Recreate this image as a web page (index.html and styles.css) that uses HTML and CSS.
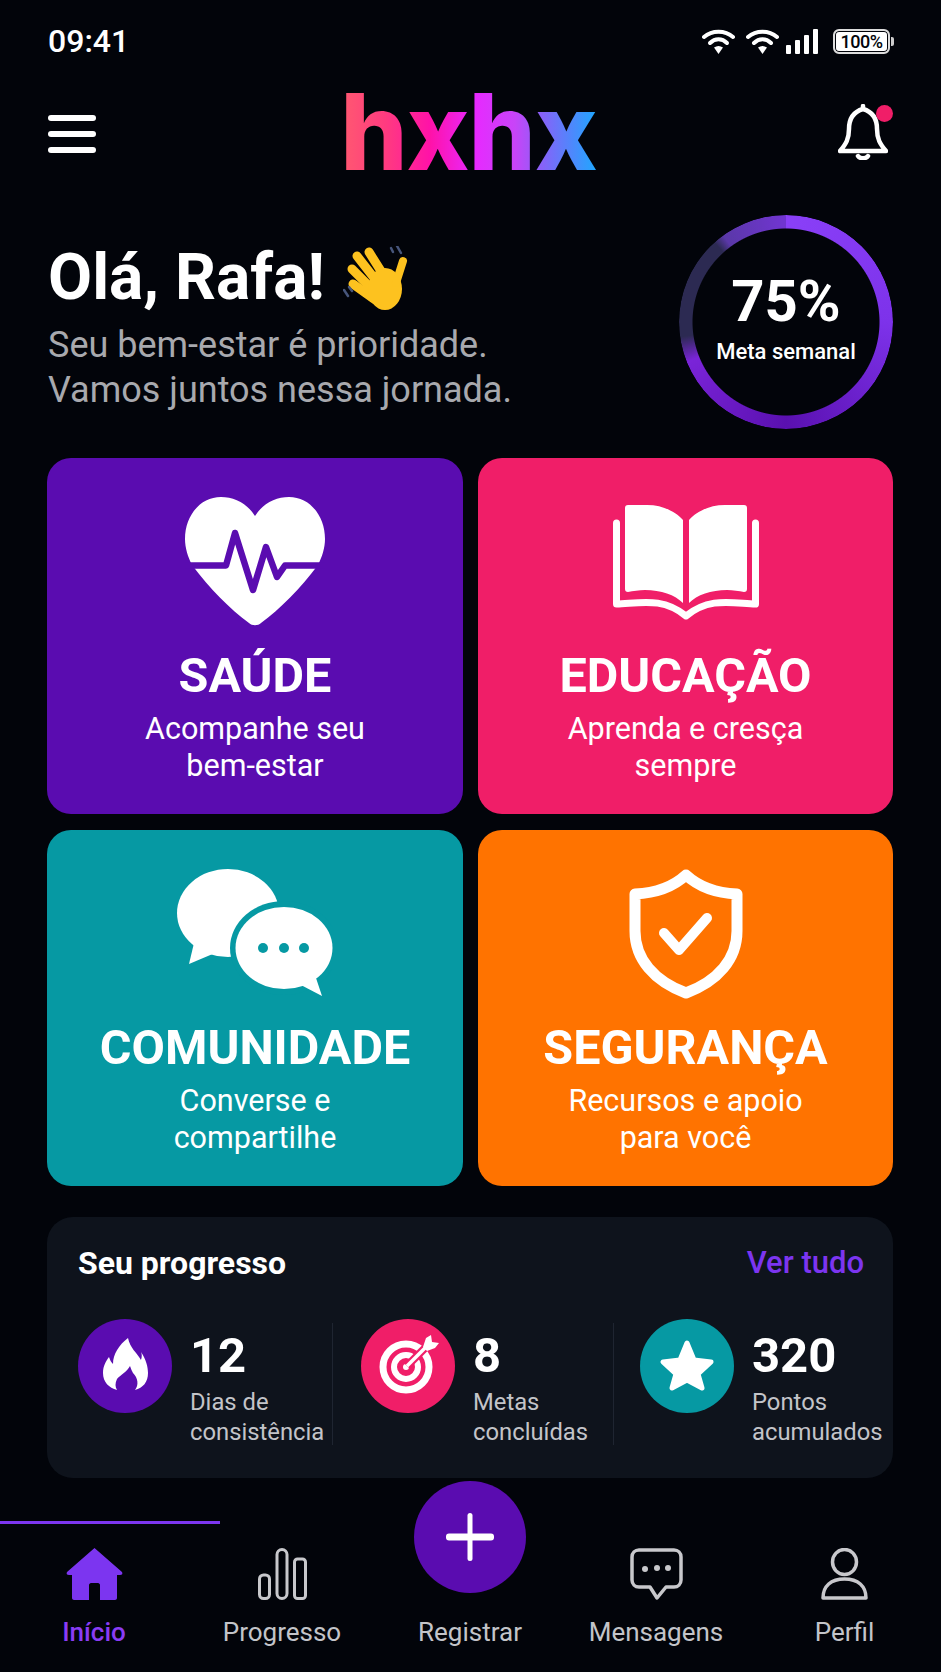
FILE: index.html
```html
<!DOCTYPE html>
<html lang="pt-BR">
<head>
  <meta charset="UTF-8" />
  <meta name="viewport" content="width=device-width, initial-scale=1.0" />
  <title>hxhx</title>
  <link rel="stylesheet" href="styles.css">
</head>
<body>
  <div class="screen">
    <div class="status-bar">
      <span class="time">09:41</span>
      <div class="status-icons">
        <svg class="wifi" viewBox="0 0 33 25" fill="none" stroke="#fff" stroke-width="4" stroke-linecap="round"><path d="M2 8C10 1 23 1 31 8"/><path d="M8 14C13 9 20 9 25 14"/><path d="M16.500 25L12 18.500C15 16.500 18 16.500 21 18.500Z" fill="#fff" stroke="none"/></svg>
        <svg class="wifi" viewBox="0 0 33 25" fill="none" stroke="#fff" stroke-width="4" stroke-linecap="round"><path d="M2 8C10 1 23 1 31 8"/><path d="M8 14C13 9 20 9 25 14"/><path d="M16.500 25L12 18.500C15 16.500 18 16.500 21 18.500Z" fill="#fff" stroke="none"/></svg>
        <svg class="signal" viewBox="0 0 32 25" fill="#fff"><rect x="0" y="16" width="5" height="9" rx="1"/><rect x="9" y="11" width="5" height="14" rx="1"/><rect x="18" y="6" width="5" height="19" rx="1"/><rect x="27" y="0" width="5" height="25" rx="1"/></svg>
        <div class="battery"><span class="battery-level">100%</span></div>
      </div>
    </div>

    <header class="top-bar">
      <div class="menu-btn"><span></span><span></span><span></span></div>
      <div class="logo">hxhx</div>
      <div class="bell">
        <svg viewBox="0 0 50 56" fill="none" stroke="#fff" stroke-width="4.500" stroke-linejoin="round" stroke-linecap="round"><path d="M25 5C15 8 11 16 11 25C11 35 8 40 2 47H48C42 40 39 35 39 25C39 16 35 8 25 5Z"/><path d="M25 2V5"/><path d="M20 52C22 55 28 55 30 52"/></svg>
        <span class="bell-dot"></span>
      </div>
    </header>

    <section class="greeting">
      <div class="greeting-text">
        <h1>Olá, Rafa! <svg class="wave" viewBox="0 0 65 65" fill="none" stroke-linecap="round"><g stroke="#fdc21f" stroke-width="9"><path d="M26 6L43 33"/><path d="M14 10L35 37"/><path d="M9 23L31 45"/><path d="M10 38L31 53"/></g><ellipse cx="42" cy="43" rx="17" ry="21" fill="#fdc21f"/><path d="M60 15L53 37" stroke="#fdc21f" stroke-width="8"/><g stroke="#47567c" stroke-width="2.500"><path d="M48 2L50 6"/><path d="M54 0L58 7"/><path d="M1 44L5 50"/><path d="M6 41L9 45"/></g></svg></h1>
        <p>Seu bem-estar é prioridade.<br>Vamos juntos nessa jornada.</p>
      </div>
      <div class="goal-ring">
        <strong>75%</strong>
        <span>Meta semanal</span>
      </div>
    </section>

    <section class="cards">
      <div class="card card-purple">
        <svg class="card-icon" viewBox="0 0 140 130"><path d="M70 19C62 6 49 0 36 0C15 0 0 19 0 42C0 51 3 60 7 68C25 92 45 112 64 126C67 129 73 129 76 126C95 112 115 92 133 68C137 60 140 51 140 42C140 19 125 0 104 0C91 0 78 6 70 19Z" fill="#fff"/><path d="M0 68.500H41L50 36L68 93L81 50L92 80L100 68.500H140" fill="none" stroke="#5a0cb0" stroke-width="6.500" stroke-linejoin="round"/></svg>
        <h2>SAÚDE</h2>
        <p>Acompanhe seu<br>bem-estar</p>
      </div>
      <div class="card card-pink">
        <svg class="card-icon" viewBox="0 0 146 130"><g fill="#fff"><path d="M15 8H34C50 8 63 15 70 23V106C62 98 48 93 32 93C26 93 20 94 15 95C13 95 12 94 12 92V11C12 9 13 8 15 8Z"/><path d="M131 8H112C96 8 83 15 76 23V106C84 98 98 93 114 93C120 93 126 94 131 95C133 95 134 94 134 92V11C134 9 133 8 131 8Z"/></g><path d="M3.500 26V107C28 106 50 100 73 119C96 100 118 106 142.500 107V26" fill="none" stroke="#fff" stroke-width="7" stroke-linejoin="round" stroke-linecap="round"/></svg>
        <h2>EDUCAÇÃO</h2>
        <p>Aprenda e cresça<br>sempre</p>
      </div>
      <div class="card card-teal">
        <svg class="card-icon" viewBox="0 0 156 130"><g fill="#fff"><ellipse cx="51" cy="44" rx="51" ry="44"/><path d="M17 74L12 95L38 84Z"/></g><ellipse cx="107" cy="79" rx="54" ry="47" fill="#0699a3"/><g fill="#fff"><ellipse cx="107" cy="79" rx="48.500" ry="41"/><path d="M138 106L145 127L122 115Z"/></g><g fill="#0699a3"><circle cx="86" cy="79" r="5"/><circle cx="107" cy="79" r="5"/><circle cx="127" cy="79" r="5"/></g></svg>
        <h2>COMUNIDADE</h2>
        <p>Converse e<br>compartilhe</p>
      </div>
      <div class="card card-orange">
        <svg class="card-icon" viewBox="0 0 114 130" fill="none" stroke="#fff" stroke-linejoin="round" stroke-linecap="round"><path d="M57 6C44 18 28 24 6 25V62C6 90 25 112 57 124C89 112 108 90 108 62V25C86 24 70 18 57 6Z" stroke-width="11"/><path d="M35 64L50 81L78 49" stroke-width="10"/></svg>
        <h2>SEGURANÇA</h2>
        <p>Recursos e apoio<br>para você</p>
      </div>
    </section>

    <section class="progress">
      <div class="progress-head">
        <h3>Seu progresso</h3>
        <a class="see-all">Ver tudo</a>
      </div>
      <div class="stats">
        <div class="stat">
          <div class="stat-icon bg-purple">
            <svg viewBox="0 0 94 94" fill="#fff"><path d="M50 19C52 29 59 34 63 41C64 38 64 35 63 33C68 40 70 48 70 54C70 63 65 69 57 71C61 66 60 59 55 54C54 52 53 50 52 47C49 53 42 56 39 60C37 64 37 68 39 71C31 69 25 63 25 54C25 47 28 42 31 38C32 41 33 43 35 45C35 35 41 26 50 19Z"/></svg>
          </div>
          <div class="stat-text">
            <strong>12</strong>
            <span>Dias de<br>consistência</span>
          </div>
        </div>
        <div class="stat">
          <div class="stat-icon bg-pink">
            <svg viewBox="0 0 94 94" fill="none" stroke="#fff"><circle cx="45" cy="48" r="23" stroke-width="7"/><circle cx="45" cy="48" r="12" stroke-width="6"/><circle cx="45" cy="48" r="3" fill="#fff" stroke="none"/><path d="M46 47L66 27" stroke="#f01e68" stroke-width="8"/><path d="M46 47L66 27" stroke-width="3.500"/><path d="M62 28L65 19L70 16L71 23L78 24L74 29L66 32Z" fill="#fff" stroke="none"/></svg>
          </div>
          <div class="stat-text">
            <strong>8</strong>
            <span>Metas<br>concluídas</span>
          </div>
        </div>
        <div class="stat">
          <div class="stat-icon bg-teal">
            <svg viewBox="0 0 94 94"><path d="M47 24L54 41L71 43L58 55L62 69L47 61L32 69L36 55L23 43L40 41Z" fill="#fff" stroke="#fff" stroke-width="5" stroke-linejoin="round"/></svg>
          </div>
          <div class="stat-text">
            <strong>320</strong>
            <span>Pontos<br>acumulados</span>
          </div>
        </div>
      </div>
    </section>

    <nav class="tabbar">
      <div class="tab active">
        <svg class="tab-icon" viewBox="0 0 57 52" fill="#7c35f0"><path d="M28.500 0L56 24C57 26 56 27 54 27H51V50C51 51 50 52 49 52H34V37C34 36 33 35 32 35H25C24 35 23 36 23 37V52H8C7 52 6 51 6 50V27H3C1 27 0 26 1 24Z"/></svg>
        <span>Início</span>
      </div>
      <div class="tab">
        <svg class="tab-icon" viewBox="0 0 49 52" fill="none" stroke="#c8c8cc" stroke-width="3"><rect x="1.500" y="27" width="10" height="23.500" rx="4"/><rect x="19" y="1.500" width="10" height="49" rx="5"/><rect x="36.500" y="11" width="11" height="39.500" rx="3"/></svg>
        <span>Progresso</span>
      </div>
      <div class="tab">
        <button class="fab"></button>
        <span>Registrar</span>
      </div>
      <div class="tab">
        <svg class="tab-icon" viewBox="0 0 53 52" fill="none" stroke="#c8c8cc" stroke-width="3.500" stroke-linejoin="round"><path d="M9 2H44C48 2 51 5 51 9V32C51 36 48 39 44 39H36L27 50L20 39H9C5 39 2 36 2 32V9C2 5 5 2 9 2Z"/><g fill="#c8c8cc" stroke="none"><circle cx="15" cy="21" r="3"/><circle cx="27" cy="20" r="3"/><circle cx="38" cy="20" r="3"/></g></svg>
        <span>Mensagens</span>
      </div>
      <div class="tab">
        <svg class="tab-icon" viewBox="0 0 47 52" fill="none" stroke="#c8c8cc" stroke-width="3.500" stroke-linejoin="round"><ellipse cx="23.500" cy="14" rx="12" ry="12.500"/><path d="M2 50C2 38 10 31 23.500 31C37 31 45 38 45 50Z"/></svg>
        <span>Perfil</span>
      </div>
    </nav>
  </div>
</body>
</html>
```

FILE: styles.css
```css
* {
  box-sizing: border-box;
}

body {
  margin: 0;
  background: #02040a;
  color: #fff;
  font-family: Roboto, sans-serif;
}

.screen {
  width: 941px;
  height: 1672px;
  overflow: hidden;
}

h1, h2, h3, p {
  margin: 0;
}

/* status bar */
.status-bar {
  height: 82px;
  padding: 0 48px;
  display: flex;
  justify-content: space-between;
  align-items: center;
}

.time {
  font-size: 32px;
  font-weight: 500;
}

.status-icons {
  display: flex;
  align-items: center;
  gap: 11px;
}

.wifi {
  width: 33px;
  height: 25px;
}

.signal {
  width: 32px;
  height: 25px;
  margin-left: -4px;
  margin-right: 4px;
}

.battery {
  position: relative;
  width: 57px;
  height: 25px;
  margin-right: 3px;
  border: 2px solid #ddd;
  border-radius: 6px;
  background: #fff;
  box-shadow: inset 0 0 0 1px #02040a;
  display: flex;
  align-items: center;
  justify-content: center;
}

.battery::after {
  content: "";
  position: absolute;
  right: -6px;
  top: 6px;
  width: 3px;
  height: 9px;
  border-radius: 0 2px 2px 0;
  background: #ccc;
}

.battery-level {
  color: #02040a;
  font-size: 18px;
  font-weight: 500;
  letter-spacing: -0.5px;
}

/* header */
.top-bar {
  height: 104px;
  padding: 0 48px;
  display: flex;
  justify-content: space-between;
  align-items: center;
}

.menu-btn {
  width: 48px;
  display: flex;
  flex-direction: column;
  gap: 10px;
}

.menu-btn span {
  height: 6px;
  border-radius: 3px;
  background: #fff;
}

.logo {
  font-family: Inter, sans-serif;
  font-size: 106px;
  font-weight: 800;
  line-height: 120px;
  letter-spacing: -1px;
  margin-left: 3px;
  margin-top: -4px;
  background: linear-gradient(90deg, #ff5a70 0%, #ff3a80 18%, #ff12a8 35%, #e828ff 52%, #c844f8 68%, #8a60f8 78%, #1ea8ff 100%);
  -webkit-background-clip: text;
  background-clip: text;
  color: transparent;
}

.bell {
  position: relative;
  width: 50px;
  height: 56px;
  margin-top: -4px;
  margin-right: 5px;
}

.bell svg {
  display: block;
  width: 50px;
  height: 56px;
}

.bell-dot {
  position: absolute;
  top: 1px;
  right: -5px;
  width: 17px;
  height: 17px;
  border-radius: 50%;
  background: #f01e68;
}

/* greeting */
.greeting {
  height: 214px;
  margin-top: 29px;
  padding: 0 48px;
  display: flex;
  justify-content: space-between;
}

.greeting-text {
  padding-top: 30px;
}

.greeting h1 {
  display: flex;
  align-items: center;
  gap: 18px;
  font-size: 64px;
  font-weight: 700;
  line-height: 66px;
  white-space: nowrap;
}

.wave {
  width: 65px;
  height: 65px;
  flex: none;
}

.greeting p {
  margin-top: 12px;
  color: #a8a9ae;
  font-size: 36px;
  line-height: 45px;
}

.goal-ring {
  position: relative;
  width: 214px;
  height: 214px;
  display: flex;
  flex-direction: column;
  align-items: center;
  padding-top: 54px;
}

.goal-ring::before {
  content: "";
  position: absolute;
  inset: 0;
  border-radius: 50%;
  background: conic-gradient(#8a40f8 0deg, #7d32ea 90deg, #5a10b0 180deg, #7a24d8 248deg, #2c2a52 262deg, #2c2a52 318deg, #5a38a8 324deg, #7035d0 358deg);
  -webkit-mask: radial-gradient(circle, transparent 93px, #000 94px);
  mask: radial-gradient(circle, transparent 93px, #000 94px);
}

.goal-ring strong {
  font-size: 58px;
  font-weight: 700;
  line-height: 64px;
}

.goal-ring span {
  font-size: 22px;
  font-weight: 500;
  line-height: 26px;
  margin-top: 6px;
}

/* cards */
.cards {
  margin-top: 29px;
  padding: 0 48px 0 47px;
  display: grid;
  grid-template-columns: 416px 415px;
  grid-auto-rows: 356px;
  gap: 16px 15px;
}

.card {
  border-radius: 24px;
  padding-top: 39px;
  display: flex;
  flex-direction: column;
  align-items: center;
  text-align: center;
}

.card-purple { background: #5a0cb0; }
.card-pink { background: #f01e68; }
.card-teal { background: #0699a3; }
.card-orange { background: #ff7300; }

.card-icon {
  height: 130px;
  flex: none;
}

.card h2 {
  margin-top: 21px;
  font-size: 48.5px;
  font-weight: 700;
  line-height: 56px;
}

.card p {
  margin-top: 6px;
  font-size: 30.5px;
  line-height: 37px;
}

/* progress panel */
.progress {
  margin: 31px 48px 0 47px;
  height: 261px;
  padding: 29px 29px 0 31px;
  border-radius: 26px;
  background: #0e131c;
}

.progress-head {
  display: flex;
  justify-content: space-between;
}

.progress-head h3 {
  font-size: 32px;
  font-weight: 700;
  line-height: 34px;
}

.see-all {
  color: #7c35f0;
  font-size: 31px;
  font-weight: 500;
  line-height: 34px;
}

.stats {
  margin-top: 39px;
  margin-right: -15px;
  display: grid;
  grid-template-columns: 255px 281px 1fr;
}

.stat {
  height: 126px;
  display: flex;
  gap: 18px;
  padding-left: 28px;
  background: linear-gradient(#1f2531, #1f2531) right bottom / 1px 122px no-repeat;
}

.stat:first-child {
  padding-left: 0;
}

.stat:last-child {
  background: none;
  padding-left: 26px;
}

.stat-icon {
  width: 94px;
  height: 94px;
  flex: none;
  border-radius: 50%;
}

.stat-icon svg {
  display: block;
}

.bg-purple { background: #5a0cb0; }
.bg-pink { background: #f01e68; }
.bg-teal { background: #0699a3; }

.stat-text {
  padding-top: 10px;
}

.stat-text strong {
  display: block;
  font-size: 49px;
  font-weight: 700;
  line-height: 54px;
}

.stat-text span {
  display: block;
  margin-top: 4px;
  color: #c3c4c9;
  font-size: 23.8px;
  line-height: 30px;
  white-space: nowrap;
}

/* bottom nav */
.tabbar {
  position: relative;
  height: 194px;
  padding-top: 70px;
  display: grid;
  grid-template-columns: 188px 188px 188px 184px 1fr;
}

.tabbar::before {
  content: "";
  position: absolute;
  left: 0;
  top: 43px;
  width: 220px;
  height: 3px;
  background: #7c35f0;
}

.tab {
  display: flex;
  flex-direction: column;
  align-items: center;
  color: #c3c4c9;
  font-size: 26px;
  line-height: 30px;
}

.tab.active {
  color: #8a3cf5;
  font-weight: 500;
}

.tab-icon {
  height: 52px;
  flex: none;
  margin-bottom: 17px;
}

.fab {
  position: relative;
  width: 112px;
  height: 112px;
  margin-top: -67px;
  margin-bottom: 24px;
  flex: none;
  border: none;
  border-radius: 50%;
  background: #5a0cb0;
}

.fab::before,
.fab::after {
  content: "";
  position: absolute;
  left: 50%;
  top: 50%;
  border-radius: 3px;
  background: #fff;
  transform: translate(-50%, -50%);
}

.fab::before {
  width: 48px;
  height: 7px;
}

.fab::after {
  width: 5px;
  height: 48px;
}
```
